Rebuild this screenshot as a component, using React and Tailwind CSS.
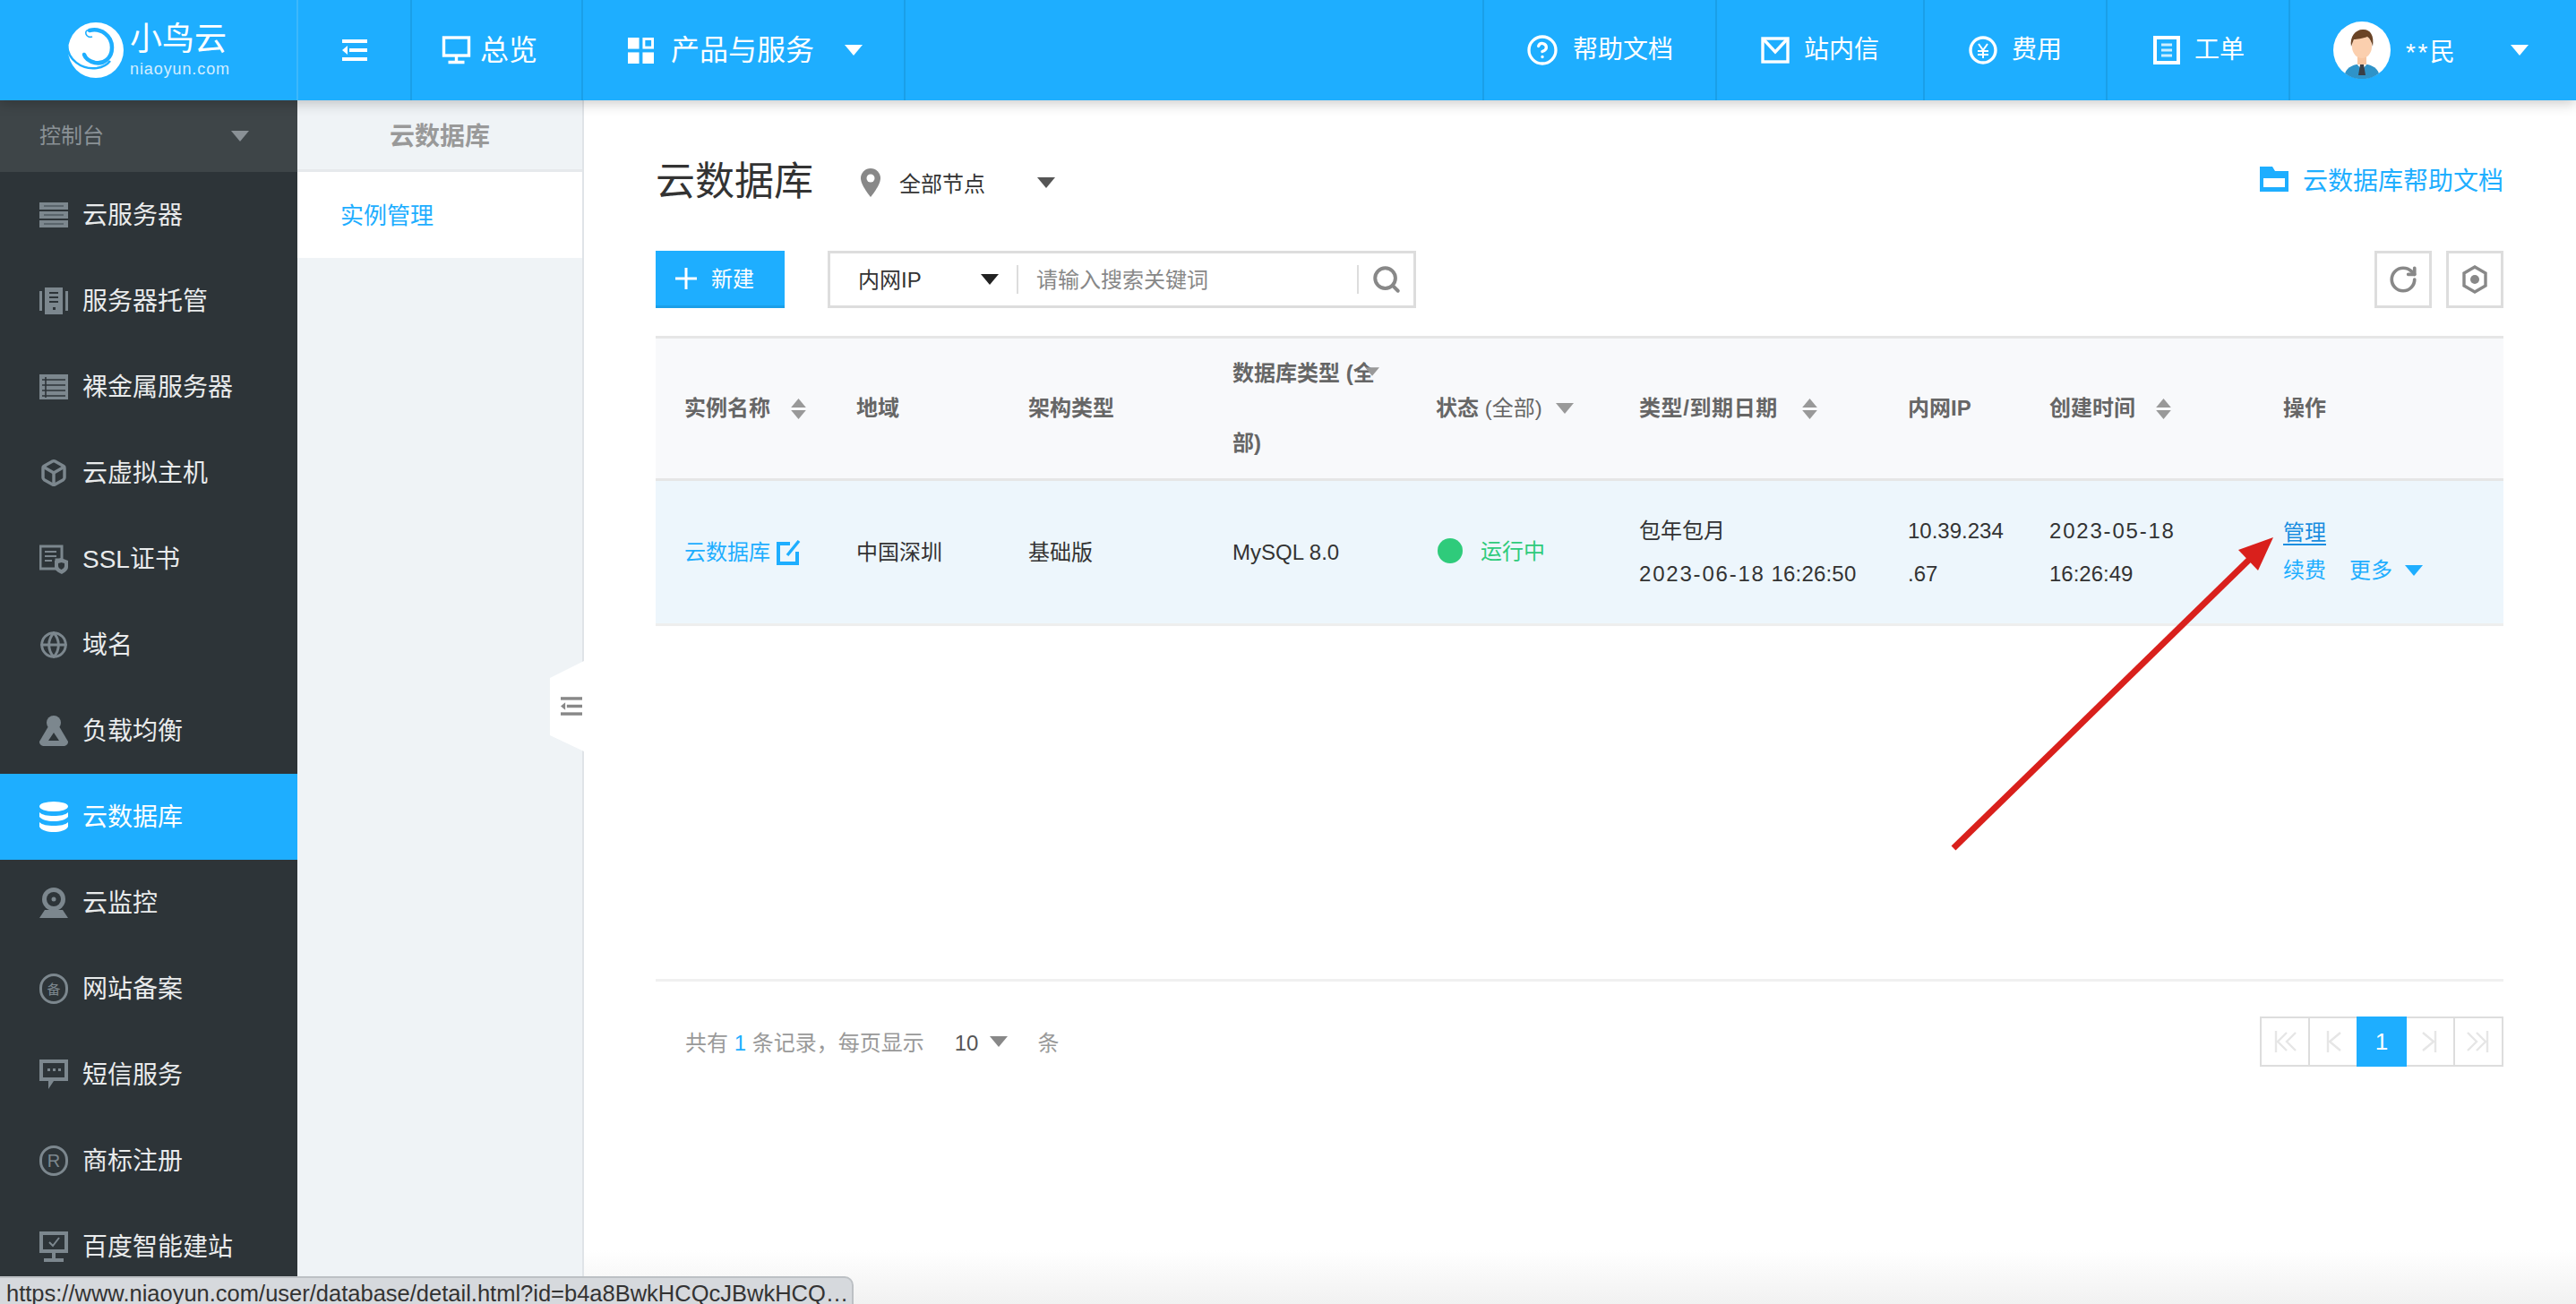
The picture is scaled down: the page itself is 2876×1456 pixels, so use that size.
import React from "react";
import { Box, CircleHelp, Globe, RotateCw, Search } from "lucide-react";

// small filled triangle, used for every dropdown and sort arrow
const Caret = ({ className = "", up = false }) => (
  <svg viewBox="0 0 10 6" className={`fill-current ${className}`}>
    <path d={up ? "M0 6h10L5 0z" : "M0 0h10L5 6z"} />
  </svg>
);

const SortIcon = () => (
  <span className="inline-flex flex-col gap-[3px] text-[#999]">
    <Caret up className="w-[19px] h-[10px]" />
    <Caret className="w-[19px] h-[10px]" />
  </span>
);

const Logo = () => (
  <div className="flex items-center gap-[7px]">
    <svg viewBox="0 0 64 64" className="w-[64px] h-[64px] shrink-0">
      <circle cx="33" cy="32" r="31" fill="#fff" />
      <path d="M26 10c13-3 25 6 25 19 0 12-9 19-19 17-8-2-11-6-12-9" fill="none" stroke="#1eaeff" strokeWidth="4.5" strokeLinecap="round" />
      <path d="M1 27c1 15 15 27 33 25 7-1 12-4 15-8" fill="none" stroke="#1eaeff" strokeWidth="2.5" />
      <path d="M26 10c-3-1-5 1-4 4s4 4 7 3" fill="none" stroke="#1eaeff" strokeWidth="1.6" />
      <circle cx="33" cy="29" r="3" fill="#fff" />
    </svg>
    <div className="text-white flex flex-col items-start whitespace-nowrap">
      <span className="text-[36px] leading-[42px] -mt-[4px]">小鸟云</span>
      <span className="text-[18px] leading-[18px] mt-[3px] opacity-80 tracking-[0.9px]">niaoyun.com</span>
    </div>
  </div>
);

const ToggleIcon = ({ className = "" }) => (
  <svg viewBox="0 0 28 24" className={`fill-current ${className}`}>
    <rect width="28" height="4" />
    <rect y="20" width="28" height="4" />
    <rect x="8" y="10" width="20" height="4" />
    <path d="M6 7v10L0 12z" />
  </svg>
);

const MonitorIcon = () => (
  <svg viewBox="0 0 32 32" className="w-[33px] h-[32px] text-white" fill="none" stroke="currentColor" strokeWidth="3.4">
    <rect x="2" y="2" width="28" height="20" />
    <path d="M16 22v7M7 29.5h18" />
  </svg>
);

const GridIcon = () => (
  <svg viewBox="0 0 30 30" className="w-[29px] h-[29px]" fill="#fff">
    <rect width="13" height="13" />
    <rect x="18.5" y="1.5" width="10" height="10" fill="none" stroke="#fff" strokeWidth="3" />
    <rect y="17" width="13" height="13" />
    <rect x="17" y="17" width="13" height="13" />
  </svg>
);

const MailIcon = () => (
  <svg viewBox="0 0 32 30" className="w-[32px] h-[30px]" fill="none" stroke="#fff" strokeWidth="3.4">
    <rect x="2" y="2" width="28" height="26" />
    <path d="M3 3l13 14L29 3" />
  </svg>
);

const YenIcon = () => (
  <svg viewBox="0 0 32 32" className="w-[32px] h-[32px]" fill="none" stroke="#fff">
    <circle cx="16" cy="16" r="14" strokeWidth="3.4" />
    <path d="M11 9l5 7 5-7M10 17h12M10 21h12M16 16v9" strokeWidth="2" />
  </svg>
);

const TicketIcon = () => (
  <svg viewBox="0 0 30 32" className="w-[30px] h-[32px]">
    <rect width="30" height="32" fill="#fff" />
    <rect x="4" y="4" width="22" height="24" fill="#1eaeff" />
    <path d="M9 10h12M9 16h12M9 22h12" stroke="#cdeeff" strokeWidth="3" />
  </svg>
);

const Avatar = () => (
  <svg viewBox="0 0 64 64" className="w-[64px] h-[64px]">
    <circle cx="32" cy="32" r="32" fill="#fff" />
    <path d="M13 58c3-8 10-10 19-11 9 1 16 3 19 11a32 32 0 0 1-38 0z" fill="#2f93c8" />
    <path d="M25 46h14l-7 8z" fill="#fff" />
    <path d="M30 48h4l2 12h-8z" fill="#3a3f46" />
    <rect x="27" y="36" width="10" height="12" fill="#f7c5a0" />
    <ellipse cx="32" cy="28" rx="11" ry="13" fill="#fbcfae" />
    <path d="M20 28c-2-12 6-20 14-19 7 0 12 6 10 19-1-5-3-9-6-11-5 2-12 3-15 3-1 2-2 5-3 8z" fill="#6a4426" />
  </svg>
);

// sidebar drawings, all on a 32x32 box
const sideIcons = {
  server: (
    <svg viewBox="0 0 32 32" className="w-[32px] h-[32px]">
      <path d="M0 2h32v8H0zM0 12h32v8H0zM0 22h32v8H0z" fill="#7c878e" />
      <path d="M5 5h22v2H5zM5 15h22v2H5zM5 25h22v2H5z" fill="#5a656c" />
    </svg>
  ),
  hosting: (
    <svg viewBox="0 0 32 32" className="w-[32px] h-[32px]">
      <path d="M0 5h3v22H0zM29 5h3v22h-3zM6 1h20v30H6z" fill="#7c878e" />
      <path d="M11 6h10v2H11zM11 11h10v2H11zM11 16h10v2H11zM15 23h3v3h-3z" fill="#2d3438" />
    </svg>
  ),
  metal: (
    <svg viewBox="0 0 32 32" className="w-[32px] h-[32px]">
      <rect y="2" width="32" height="28" fill="#7c878e" />
      <path d="M3 8h26M3 14h26M3 20h26M3 26h26M7 5v23" stroke="#2d3438" strokeWidth="1.6" />
    </svg>
  ),
  ssl: (
    <svg viewBox="0 0 32 32" className="w-[32px] h-[34px]">
      <path d="M1 2h24v15h-6v10H1z" fill="none" stroke="#7c878e" strokeWidth="3" />
      <path d="M6 8h13M6 13h13M6 18h8" stroke="#7c878e" strokeWidth="2" />
      <path d="M17 18l7-3 8 3v7c0 4-4 6-7 8-4-2-8-4-8-8z" fill="#7c878e" />
      <path d="M21 21l3.5-1 3.5 1v3c0 2-2 3-3.5 4-1.5-1-3.5-2-3.5-4z" fill="#2d3438" />
    </svg>
  ),
  balance: (
    <svg viewBox="0 0 32 34" className="w-[32px] h-[34px]" fill="#7c878e">
      <circle cx="16" cy="8" r="8" />
      <path d="M10 12h12l10 17a5 5 0 0 1-4 5H4a5 5 0 0 1-4-5z" />
      <path d="M16 19l-6 9h12z" fill="#2d3438" />
    </svg>
  ),
  database: (
    <svg viewBox="0 0 32 34" className="w-[32px] h-[34px]" fill="#fff">
      <ellipse cx="16" cy="5.5" rx="16" ry="5.5" />
      <path d="M0 12c3 3 9 4 16 4s13-1 16-4v5c-2 3-9 5-16 5S2 20 0 17z" />
      <path d="M0 23c3 3 9 4 16 4s13-1 16-4v5c-2 4-9 6-16 6S2 32 0 28z" />
    </svg>
  ),
  monitor: (
    <svg viewBox="0 0 32 34" className="w-[32px] h-[34px]">
      <path d="M0 34l6-9h20l6 9z" fill="#7c878e" />
      <circle cx="16" cy="13" r="13" fill="#7c878e" />
      <circle cx="16" cy="13" r="8" fill="#2d3438" />
      <circle cx="16" cy="13" r="2.5" fill="#7c878e" />
    </svg>
  ),
  sms: (
    <svg viewBox="0 0 32 34" className="w-[32px] h-[34px]">
      <path d="M0 0h32v24H16l-6 9v-9H0z" fill="#7c878e" />
      <path d="M4 4h24v16H4z" fill="#2d3438" />
      <path d="M9 10h3v3H9zM15 10h3v3h-3zM21 10h3v3h-3z" fill="#7c878e" />
    </svg>
  ),
  site: (
    <svg viewBox="0 0 32 34" className="w-[32px] h-[34px]">
      <rect width="32" height="24" fill="#7c878e" />
      <rect x="4" y="4" width="24" height="16" fill="#2d3438" />
      <path d="M11 12l4 4 7-9" fill="none" stroke="#7c878e" strokeWidth="2" />
      <path d="M14 24h4v6h-4zM5 30h22v4H5z" fill="#7c878e" />
    </svg>
  ),
};

const menu = [
  { label: "云服务器", icon: sideIcons.server },
  { label: "服务器托管", icon: sideIcons.hosting },
  { label: "裸金属服务器", icon: sideIcons.metal },
  { label: "云虚拟主机", icon: <Box className="w-[34px] h-[36px] text-[#7c878e]" strokeWidth={2.6} /> },
  { label: "SSL证书", icon: sideIcons.ssl },
  { label: "域名", icon: <Globe className="w-[34px] h-[34px] text-[#7c878e]" strokeWidth={2.2} /> },
  { label: "负载均衡", icon: sideIcons.balance },
  { label: "云数据库", icon: sideIcons.database, active: true },
  { label: "云监控", icon: sideIcons.monitor },
  {
    label: "网站备案",
    icon: (
      <span className="w-[32px] h-[34px] rounded-full border-[3px] border-[#7c878e] flex items-center justify-center text-[#7c878e] text-[15px] leading-none">
        备
      </span>
    ),
  },
  { label: "短信服务", icon: sideIcons.sms },
  {
    label: "商标注册",
    icon: (
      <span className="w-[32px] h-[34px] rounded-full border-[3px] border-[#7c878e] flex items-center justify-center text-[#7c878e] text-[20px] leading-none">
        R
      </span>
    ),
  },
  { label: "百度智能建站", icon: sideIcons.site },
];

const topRight = [
  { label: "帮助文档", icon: <CircleHelp className="w-[36px] h-[36px] text-white" strokeWidth={2.2} />, w: "w-[260px]", pad: "pl-[47px]" },
  { label: "站内信", icon: <MailIcon />, w: "w-[232px]", pad: "pl-[49px]" },
  { label: "费用", icon: <YenIcon />, w: "w-[204px]", pad: "pl-[49px]" },
  { label: "工单", icon: <TicketIcon />, w: "w-[204px]", pad: "pl-[51px]" },
];

const Header = () => (
  <header className="h-[112px] shrink-0 flex bg-[#1eaeff] text-white shadow-[0_3px_14px_rgba(0,0,0,0.22)] relative z-10">
    <div className="w-[333px] flex items-center pl-[74px] border-r-2 border-[#3cb8fb]">
      <Logo />
    </div>
    <div className="w-[127px] flex items-center pl-[49px] border-r-2 border-[#1a9fe8]">
      <ToggleIcon className="w-[28px] h-[24px] text-white" />
    </div>
    <div className="w-[191px] flex items-center pl-[33px] gap-[10px] border-r-2 border-[#1a9fe8] text-[32px]">
      <MonitorIcon />
      <span>总览</span>
    </div>
    <div className="w-[360px] flex items-center pl-[50px] border-r-2 border-[#1a9fe8] text-[32px]">
      <GridIcon />
      <span className="ml-[19px]">产品与服务</span>
      <Caret className="w-[20px] h-[12px] ml-[34px]" />
    </div>
    <div className="flex-1 border-r-2 border-[#1a9fe8]" />
    {topRight.map((item) => (
      <div key={item.label} className={`${item.w} ${item.pad} flex items-center gap-[16px] border-r-2 border-[#1a9fe8] text-[28px]`}>
        {item.icon}
        <span>{item.label}</span>
      </div>
    ))}
    <div className="w-[319px] flex items-center pl-[48px] text-[28px]">
      <Avatar />
      <span className="ml-[17px] mt-[6px] tracking-[2.5px]">**民</span>
      <Caret className="w-[20px] h-[12px] ml-[60px]" />
    </div>
  </header>
);

const Sidebar = () => (
  <aside className="w-[332px] shrink-0 bg-[#2d3438] overflow-hidden">
    <div className="h-[80px] bg-[#3e4548] flex items-center justify-between pl-[44px] pr-[54px] text-[24px] text-[#8a9196]">
      <span>控制台</span>
      <Caret className="w-[20px] h-[12px] text-[#8a9196]" />
    </div>
    {menu.map((item) => (
      <div
        key={item.label}
        className={`h-[96px] flex items-center pl-[44px] gap-[16px] text-[28px] ${item.active ? "bg-[#1eaeff] text-white" : "text-[#e9ebec]"}`}
      >
        <span className="w-[32px] flex justify-center shrink-0">{item.icon}</span>
        <span className="pt-[2px]">{item.label}</span>
      </div>
    ))}
  </aside>
);

const SubNav = () => (
  <nav className="w-[320px] shrink-0 bg-[#eff3f6] border-r-2 border-[#e0e4e8]">
    <div className="h-[80px] flex items-center justify-center pt-[4px] text-[28px] text-[#999] font-bold border-b-[3px] border-[#e6e9ec]">
      云数据库
    </div>
    <div className="h-[96px] bg-white flex items-center pl-[48px] pt-[2px] text-[26px] text-[#1eaeff]">实例管理</div>
  </nav>
);

const Th = ({ className = "", children }) => (
  <th className={`pl-[32px] text-left align-middle font-bold text-[24px] leading-[78px] text-[#666] ${className}`}>{children}</th>
);

const Td = ({ children, color = "text-[#333]" }) => (
  <td className={`pl-[32px] align-middle text-[24px] leading-[48px] ${color}`}>{children}</td>
);

const Table = () => (
  <table className="table-fixed w-[2063px] border-collapse">
    <thead>
      <tr className="bg-[#f8f9fb] border-t-[3px] border-b-[3px] border-[#e6e6e6] h-[158px]">
        <Th className="w-[192px]">
          <span className="inline-flex items-center gap-[22px]">实例名称 <SortIcon /></span>
        </Th>
        <Th className="w-[192px]">地域</Th>
        <Th className="w-[228px]">架构类型</Th>
        <Th className="w-[227px] relative">
          数据库类型 (全
          <br />
          部)
          <Caret className="absolute left-[180px] top-[32px] w-[16px] h-[10px] text-[#999]" />
        </Th>
        <Th className="w-[227px]">
          <span className="inline-flex items-center gap-[15px]">
            <span>
              状态 <span className="font-normal">(全部)</span>
            </span>
            <Caret className="w-[20px] h-[12px] text-[#999]" />
          </span>
        </Th>
        <Th className="w-[300px]">
          <span className="inline-flex items-center gap-[26px]">
            <span className="tracking-[0.6px]">类型/到期日期</span> <SortIcon />
          </span>
        </Th>
        <Th className="w-[158px]">内网IP</Th>
        <Th className="w-[261px]">
          <span className="inline-flex items-center gap-[22px]">创建时间 <SortIcon /></span>
        </Th>
        <Th className="w-[278px]">操作</Th>
      </tr>
    </thead>
    <tbody>
      <tr className="bg-[#edf6fc] border-b-[3px] border-[#eeeeee] h-[162px]">
        <Td color="text-[#1eaeff]">
          <span className="inline-flex items-center gap-[7px]">
            云数据库
            <svg viewBox="0 0 27 28" className="w-[27px] h-[28px]" fill="none" stroke="#1eaeff" strokeWidth="4">
              <path d="M15 4H2v22h21V13" />
              <path d="M25 1L12 17" strokeWidth="3.4" />
            </svg>
          </span>
        </Td>
        <Td>中国深圳</Td>
        <Td>基础版</Td>
        <Td>MySQL 8.0</Td>
        <Td color="text-[#2fcb7b]">
          <span className="inline-flex items-center gap-[20px] ml-[2px] mt-[3px]">
            <span className="w-[28px] h-[28px] rounded-full bg-[#2fcb7b]" />
            <span className="pt-[1px]">运行中</span>
          </span>
        </Td>
        <Td>
          包年包月
          <br />
          <span className="tracking-[1.8px]">2023-06-18</span> <span className="tracking-[0.2px]">16:26:50</span>
        </Td>
        <Td>
          10.39.234
          <br />
          .67
        </Td>
        <Td>
          <span className="tracking-[1.8px]">2023-05-18</span>
          <br />
          16:26:49
        </Td>
        <Td>
          <div className="leading-[40px] text-[#1a8ee0] underline underline-offset-4">管理</div>
          <div className="leading-[44px] text-[#1eaeff] flex items-center">
            续费
            <span className="ml-[26px]">更多</span>
            <Caret className="w-[20px] h-[12px] ml-[14px]" />
          </div>
        </Td>
      </tr>
    </tbody>
  </table>
);

const PageBtn = ({ children, active }) => (
  <div
    className={`w-[56px] h-[56px] flex items-center justify-center -ml-[2px] first:ml-0 ${
      active ? "bg-[#1eaeff] text-white text-[26px] relative" : "border-2 border-[#dddddd]"
    }`}
  >
    {children}
  </div>
);

const PagerGlyph = ({ d }) => (
  <svg viewBox="0 0 30 26" className="w-[30px] h-[26px]" fill="none" stroke="#e6e6e6" strokeWidth="2.4">
    <path d={d} />
  </svg>
);

const Main = () => (
  <main className="flex-1 min-w-0 pl-[80px] pr-[81px] pt-[59px] relative">
    <div className="h-[64px] flex items-center">
      <h1 className="text-[44px] font-normal text-[#333]">云数据库</h1>
      <svg viewBox="0 0 22 32" className="w-[22px] h-[32px] ml-[53px] mt-[2px]">
        <path d="M11 0a11 11 0 0 1 11 11c0 8-11 21-11 21S0 19 0 11A11 11 0 0 1 11 0z" fill="#888" />
        <circle cx="11" cy="11" r="4.5" fill="#fff" />
      </svg>
      <span className="ml-[21px] mt-[6px] text-[24px] text-[#333]">全部节点</span>
      <Caret className="w-[20px] h-[12px] ml-[58px] mt-[2px] text-[#555]" />
      <a className="ml-auto flex items-center gap-[16px] text-[28px] text-[#1eaeff]">
        <svg viewBox="0 0 32 28" className="w-[32px] h-[28px] -mt-[6px]">
          <path d="M0 0h14l3 5h15v23H0z" fill="#1eaeff" />
          <path d="M4 13h24v10H4z" fill="#fff" />
        </svg>
        云数据库帮助文档
      </a>
    </div>

    <div className="mt-[45px] h-[64px] flex items-center">
      <button className="w-[144px] h-[64px] bg-[#1eaeff] border-b-[3px] border-[#1a9fe8] text-white text-[24px] flex items-center pl-[22px] gap-[16px]">
        <svg viewBox="0 0 24 24" className="w-[24px] h-[24px] fill-white">
          <path d="M10.5 0h3v10.5H24v3H13.5V24h-3V13.5H0v-3h10.5z" />
        </svg>
        <span className="pt-[2px]">新建</span>
      </button>
      <div className="ml-[48px] w-[657px] h-[64px] border-[3px] border-[#dddddd] flex items-center text-[24px]">
        <span className="ml-[31px] w-[137px] pt-[2px] text-[#333]">内网IP</span>
        <Caret className="w-[20px] h-[12px] text-[#222]" />
        <span className="ml-[20px] w-[2px] h-[32px] bg-[#dddddd]" />
        <span className="ml-[20px] w-[358px] pt-[2px] text-[#888]">请输入搜索关键词</span>
        <span className="w-[2px] h-[32px] bg-[#dddddd]" />
        <Search className="ml-[14px] w-[34px] h-[34px] text-[#888]" strokeWidth={2.8} />
      </div>
      <div className="ml-auto flex gap-[16px]">
        <button className="w-[64px] h-[64px] border-[3px] border-[#dddddd] flex items-center justify-center">
          <RotateCw className="w-[34px] h-[34px] text-[#888]" strokeWidth={2.6} />
        </button>
        <button className="w-[64px] h-[64px] border-[3px] border-[#dddddd] flex items-center justify-center">
          <svg viewBox="0 0 28 32" className="w-[28px] h-[32px]">
            <path d="M14 2l12 7v14l-12 7-12-7V9z" fill="none" stroke="#888" strokeWidth="3.4" />
            <circle cx="14" cy="16" r="5" fill="#888" />
          </svg>
        </button>
      </div>
    </div>

    <div className="mt-[31px] h-[721px] border-b-[3px] border-[#f0f0f0]">
      <Table />
    </div>

    <div className="mt-[39px] flex items-center h-[56px]">
      <div className="pl-[33px] flex items-center text-[24px] text-[#999]">
        <span className="pt-[4px]">
          共有 <span className="text-[#1eaeff]">1</span> 条记录，每页显示
        </span>
        <span className="ml-[34px] pt-[3px] text-[#555]">10</span>
        <Caret className="w-[20px] h-[12px] ml-[13px] text-[#888]" />
        <span className="ml-[33px] pt-[4px]">条</span>
      </div>
      <div className="ml-auto flex">
        <PageBtn>
          <PagerGlyph d="M5 1v24M17 3L7 13l10 10M27 3L17 13l10 10" />
        </PageBtn>
        <PageBtn>
          <PagerGlyph d="M9 1v24M23 3L11 13l12 10" />
        </PageBtn>
        <PageBtn active>1</PageBtn>
        <PageBtn>
          <PagerGlyph d="M21 1v24M7 3l12 10L7 23" />
        </PageBtn>
        <PageBtn>
          <PagerGlyph d="M25 1v24M3 3l10 10L3 23M13 3l10 10-10 10" />
        </PageBtn>
      </div>
    </div>

    {/* collapse tab sits over the sub nav edge */}
    <div className="absolute left-[-38px] top-[626px] w-[38px] h-[101px] bg-white [clip-path:polygon(100%_0,100%_100%,0_83px,0_19px)] flex items-center justify-end pr-[2px] text-[#888]">
      <ToggleIcon className="w-[24px] h-[23px]" />
    </div>

    {/* faint shade at the page bottom */}
    <div className="absolute left-0 right-0 bottom-0 h-[60px] bg-gradient-to-b from-transparent to-[#f1f1f1]" />
  </main>
);

export default function App() {
  return (
    <div className="relative w-[2876px] h-[1456px] overflow-hidden flex flex-col bg-white font-['Liberation_Sans','Noto_Sans_CJK_SC',sans-serif]">
      <Header />
      <div className="flex flex-1 min-h-0">
        <Sidebar />
        <SubNav />
        <Main />
      </div>

      {/* red annotation arrow */}
      <svg viewBox="0 0 380 370" className="absolute left-[2170px] top-[590px] w-[380px] h-[370px]">
        <path d="M11 357L342 34" stroke="#d9201c" strokeWidth="7" />
        <path d="M368 10L329 24l22 23z" fill="#d9201c" />
      </svg>

      {/* browser status bubble */}
      <div className="absolute left-0 bottom-0 w-[953px] h-[31px] overflow-hidden bg-[#d6d9dd] border-t-2 border-r-2 border-[#bcc0c4] rounded-tr-[10px] pl-[7px] text-[25.5px] leading-[34px] text-[#333] whitespace-nowrap">
        https://www.niaoyun.com/user/database/detail.html?id=b4a8BwkHCQcJBwkHCQ…
      </div>
    </div>
  );
}
